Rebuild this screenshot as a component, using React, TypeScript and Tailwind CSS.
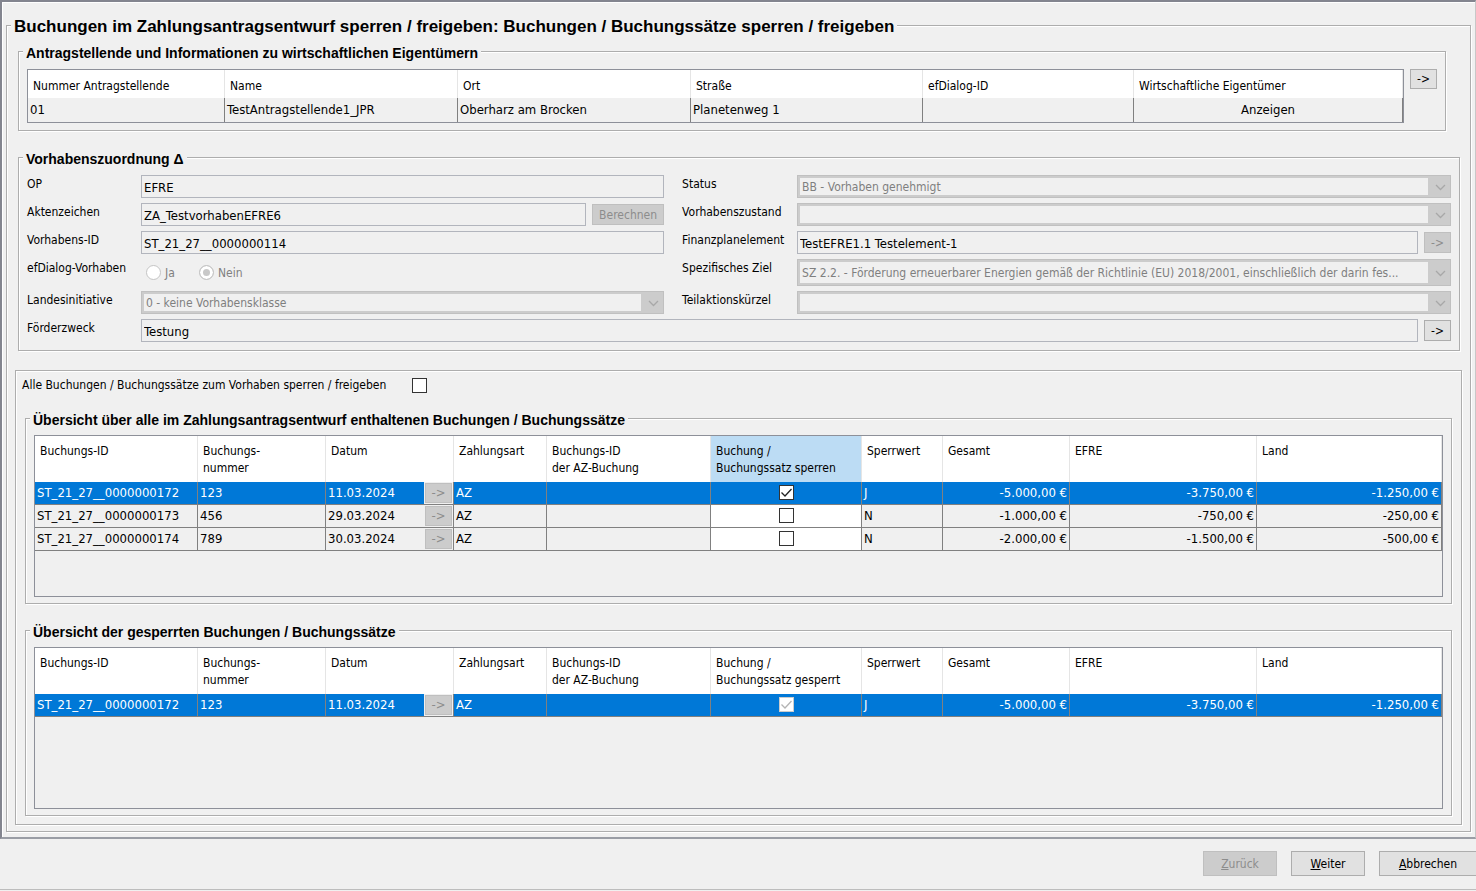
import type { ReactNode } from "react";
import clsx from "clsx";

type Booking = {
  id: string;
  number: string;
  date: string;
  type: string;
  locked: boolean;
  lockValue: string;
  total: string;
  efre: string;
  land: string;
};

const bookings: Booking[] = [
  {
    id: "ST_21_27__0000000172",
    number: "123",
    date: "11.03.2024",
    type: "AZ",
    locked: true,
    lockValue: "J",
    total: "-5.000,00 €",
    efre: "-3.750,00 €",
    land: "-1.250,00 €",
  },
  {
    id: "ST_21_27__0000000173",
    number: "456",
    date: "29.03.2024",
    type: "AZ",
    locked: false,
    lockValue: "N",
    total: "-1.000,00 €",
    efre: "-750,00 €",
    land: "-250,00 €",
  },
  {
    id: "ST_21_27__0000000174",
    number: "789",
    date: "30.03.2024",
    type: "AZ",
    locked: false,
    lockValue: "N",
    total: "-2.000,00 €",
    efre: "-1.500,00 €",
    land: "-500,00 €",
  },
];

const etched =
  "min-w-0 border border-[#adadad] shadow-[inset_1px_1px_0_#ffffff,1px_1px_0_#ffffff]";

function Group({
  title,
  className,
  children,
}: {
  title: string;
  className?: string;
  children: ReactNode;
}) {
  return (
    <fieldset className={clsx(etched, "px-2", className)}>
      <legend className="-ml-1 bg-[#f0f0f0] px-[3px] pt-1 font-['Liberation_Sans',Arial,sans-serif] text-[14px] leading-4 font-bold">
        {title}
      </legend>
      {children}
    </fieldset>
  );
}

function ArrowButton({
  label,
  disabled,
  className,
}: {
  label: string;
  disabled?: boolean;
  className?: string;
}) {
  return (
    <button
      type="button"
      aria-label={label}
      disabled={disabled}
      className={clsx(
        "flex w-[27px] shrink-0 items-center justify-center border border-[#adadad] bg-[#e1e1e1] leading-4 disabled:border-[#bfbfbf] disabled:bg-[#cccccc] disabled:text-[#8c8c8c]",
        className
      )}
    >
      -&gt;
    </button>
  );
}

function CheckBox({
  id,
  label,
  checked,
  disabled,
}: {
  id?: string;
  label?: string;
  checked?: boolean;
  disabled?: boolean;
}) {
  return (
    <span className="inline-grid size-[15px] align-top">
      <input
        id={id}
        type="checkbox"
        aria-label={label}
        defaultChecked={checked}
        disabled={disabled}
        className="peer col-start-1 row-start-1 size-[15px] appearance-none border border-[#333333] bg-white disabled:border-[#cccccc]"
      />
      <svg
        viewBox="0 0 15 15"
        className="pointer-events-none invisible col-start-1 row-start-1 size-[15px] fill-none stroke-[#222222] peer-checked:visible peer-disabled:stroke-[#b4b4b4]"
      >
        <path d="M2.5 7.5 L6 11 L12.5 4" strokeWidth="1.3" />
      </svg>
    </span>
  );
}

function Field({ id, value }: { id: string; value: string }) {
  return (
    <input
      id={id}
      type="text"
      readOnly
      defaultValue={value}
      className="h-[23px] w-full min-w-0 flex-1 border border-[#b2b5bd] bg-[#f0f0f0] px-[2px] pt-px text-[13px] outline-none"
    />
  );
}

function ComboBox({
  id,
  value,
  className = "h-[23px]",
}: {
  id: string;
  value?: string;
  className?: string;
}) {
  return (
    <div
      className={clsx(
        "flex min-w-0 flex-1 border border-[#c0c0c0] bg-[#cccccc] p-[2px]",
        className
      )}
    >
      <select
        id={id}
        disabled
        className="min-w-0 flex-1 appearance-none overflow-hidden bg-[#f0f0f0] px-[2px] text-ellipsis text-[#7f7f7f] opacity-100"
      >
        <option>{value}</option>
      </select>
      <svg
        viewBox="0 0 20 17"
        className="w-5 shrink-0 fill-none stroke-[#a8a8a8]"
      >
        <path d="M8 7 L12.5 11.5 L17 7" strokeWidth="1.3" />
      </svg>
    </div>
  );
}

function FieldLabel({
  htmlFor,
  right,
  children,
}: {
  htmlFor: string;
  right?: boolean;
  children: ReactNode;
}) {
  return (
    <label
      htmlFor={htmlFor}
      className={clsx(
        "pt-px leading-4 whitespace-nowrap",
        right && "pl-[18px]"
      )}
    >
      {children}
    </label>
  );
}

function Radio({ label, checked }: { label: string; checked?: boolean }) {
  return (
    <label className="flex w-[53px] items-center gap-1 text-[#808080]">
      <input
        type="radio"
        name="efdialog-vorhaben"
        defaultChecked={checked}
        disabled
        className="size-[15px] shrink-0 appearance-none rounded-full border border-[#c4c4c4] bg-white checked:bg-[#c8c8c8] checked:shadow-[inset_0_0_0_3px_#ffffff]"
      />
      {label}
    </label>
  );
}

function ApplicantTable() {
  const th =
    "h-7 border-r border-[#e5e5e5] bg-white px-[5px] pt-1 text-left font-normal";
  const td = "h-6 border-r border-[#808080] px-[2px] text-[13px]";
  return (
    <table className="w-full flex-1 table-fixed border-separate border-spacing-0 border border-[#8d9099]">
      <colgroup>
        <col className="w-[197px]" />
        <col className="w-[233px]" />
        <col className="w-[233px]" />
        <col className="w-[232px]" />
        <col className="w-[211px]" />
        <col />
      </colgroup>
      <thead>
        <tr>
          <th className={th}>Nummer Antragstellende</th>
          <th className={th}>Name</th>
          <th className={th}>Ort</th>
          <th className={th}>Straße</th>
          <th className={th}>efDialog-ID</th>
          <th className={th}>Wirtschaftliche Eigentümer</th>
        </tr>
      </thead>
      <tbody>
        <tr>
          <td className={td}>01</td>
          <td className={td}>TestAntragstellende1_JPR</td>
          <td className={td}>Oberharz am Brocken</td>
          <td className={td}>Planetenweg 1</td>
          <td className={td}></td>
          <td className={clsx(td, "text-center")}>Anzeigen</td>
        </tr>
      </tbody>
    </table>
  );
}

function BookingTable({
  rows,
  lockTitle,
  readOnly,
}: {
  rows: Booking[];
  lockTitle: string;
  readOnly?: boolean;
}) {
  const th =
    "h-[46px] border-r border-[#e5e5e5] px-[5px] pt-[7px] text-left align-top leading-[17px] font-normal";
  return (
    <div className="h-[162px] border border-[#8d9099]">
      <table className="w-full table-fixed border-separate border-spacing-0">
        <colgroup>
          <col className="w-[163px]" />
          <col className="w-[128px]" />
          <col className="w-[128px]" />
          <col className="w-[93px]" />
          <col className="w-[164px]" />
          <col className="w-[151px]" />
          <col className="w-[81px]" />
          <col className="w-[127px]" />
          <col className="w-[187px]" />
          <col />
        </colgroup>
        <thead className="bg-white">
          <tr>
            <th className={th}>Buchungs-ID</th>
            <th className={th}>
              Buchungs-
              <br />
              nummer
            </th>
            <th className={th}>Datum</th>
            <th className={th}>Zahlungsart</th>
            <th className={th}>
              Buchungs-ID
              <br />
              der AZ-Buchung
            </th>
            <th
              className={clsx(
                th,
                "whitespace-nowrap",
                !readOnly && "bg-[#bcdcf4]"
              )}
            >
              Buchung /
              <br />
              {lockTitle}
            </th>
            <th className={th}>Sperrwert</th>
            <th className={th}>Gesamt</th>
            <th className={th}>EFRE</th>
            <th className={th}>Land</th>
          </tr>
        </thead>
        <tbody className="text-[13px]">
          {rows.map((row, i) => {
            const selected = i === 0;
            const td = "h-[23px] border-r border-b border-[#808080] px-[2px]";
            return (
              <tr
                key={row.id}
                className={clsx(selected && "bg-[#0078d7] text-white")}
              >
                <td className={td}>{row.id}</td>
                <td className={td}>{row.number}</td>
                <td className="h-[23px] border-r border-b border-[#808080]">
                  <div className="flex items-center justify-between pl-[2px]">
                    {row.date}
                    <span className="bg-[#f0f0f0] p-px">
                      <ArrowButton
                        label="Datum öffnen"
                        disabled
                        className="h-5"
                      />
                    </span>
                  </div>
                </td>
                <td className={td}>{row.type}</td>
                <td className={td}></td>
                <td className={clsx(td, "text-center", !selected && "bg-white")}>
                  <CheckBox
                    label={lockTitle}
                    checked={row.locked}
                    disabled={readOnly}
                  />
                </td>
                <td className={td}>{row.lockValue}</td>
                <td className={clsx(td, "text-right")}>{row.total}</td>
                <td className={clsx(td, "text-right")}>{row.efre}</td>
                <td className={clsx(td, "text-right")}>{row.land}</td>
              </tr>
            );
          })}
        </tbody>
      </table>
    </div>
  );
}

export default function App() {
  const footerButton =
    "h-[25px] w-[74px] border border-[#adadad] bg-[#e1e1e1] disabled:border-[#bfbfbf] disabled:bg-[#cccccc] disabled:text-[#8c8c8c]";
  return (
    <div className="flex min-h-screen flex-col bg-[#f0f0f0] font-['DejaVu_Sans_Condensed','Noto_Sans',sans-serif] text-[12px] leading-4 text-black">
      <main className="border-t-2 border-r border-b-2 border-l-2 border-t-[#83858f] border-r-[#c8c8c8] border-b-[#9a9da5] border-l-[#83858f] pt-[11px] pr-1 pb-[5px] pl-1 shadow-[inset_1px_1px_0_#ffffff]">
        <fieldset className={clsx(etched, "px-2 pb-[6px]")}>
          <legend className="-ml-1 bg-[#f0f0f0] px-[3px] pt-1 font-['Liberation_Sans',Arial,sans-serif] text-[17px] leading-5 font-bold">
            Buchungen im Zahlungsantragsentwurf sperren / freigeben: Buchungen /
            Buchungssätze sperren / freigeben
          </legend>

          <Group
            title="Antragstellende und Informationen zu wirtschaftlichen Eigentümern"
            className="mt-1 mr-4 ml-[3px] pt-2 pb-[7px]"
          >
            <div className="flex items-start gap-[6px]">
              <ApplicantTable />
              <ArrowButton label="Antragstellende öffnen" className="h-5" />
            </div>
          </Group>

          <Group
            title="Vorhabenszuordnung Δ"
            className="mt-4 mr-[2px] ml-[3px] pt-2 pb-2"
          >
            <div className="grid grid-cols-[114px_minmax(0,4fr)_133px_minmax(0,5fr)] items-start gap-y-[5px]">
              <FieldLabel htmlFor="op">OP</FieldLabel>
              <Field id="op" value="EFRE" />
              <FieldLabel htmlFor="status" right>
                Status
              </FieldLabel>
              <ComboBox id="status" value="BB - Vorhaben genehmigt" />

              <FieldLabel htmlFor="aktenzeichen">Aktenzeichen</FieldLabel>
              <div className="flex items-center gap-[6px]">
                <Field id="aktenzeichen" value="ZA_TestvorhabenEFRE6" />
                <button
                  type="button"
                  disabled
                  className="h-[21px] w-[72px] shrink-0 border border-[#bfbfbf] bg-[#cccccc] text-[#8c8c8c]"
                >
                  Berechnen
                </button>
              </div>
              <FieldLabel htmlFor="zustand" right>
                Vorhabenszustand
              </FieldLabel>
              <ComboBox id="zustand" />

              <FieldLabel htmlFor="vorhabens-id">Vorhabens-ID</FieldLabel>
              <Field id="vorhabens-id" value="ST_21_27__0000000114" />
              <FieldLabel htmlFor="finanzplan" right>
                Finanzplanelement
              </FieldLabel>
              <div className="flex items-center gap-[6px]">
                <Field id="finanzplan" value="TestEFRE1.1 Testelement-1" />
                <ArrowButton
                  label="Finanzplanelement öffnen"
                  disabled
                  className="h-[21px]"
                />
              </div>

              <span id="efdialog-label" className="pt-px">
                efDialog-Vorhaben
              </span>
              <div
                role="radiogroup"
                aria-labelledby="efdialog-label"
                className="flex h-[27px] items-center pl-[5px]"
              >
                <Radio label="Ja" />
                <Radio label="Nein" checked />
              </div>
              <FieldLabel htmlFor="ziel" right>
                Spezifisches Ziel
              </FieldLabel>
              <ComboBox
                id="ziel"
                className="h-[27px]"
                value="SZ 2.2. - Förderung erneuerbarer Energien gemäß der Richtlinie (EU) 2018/2001, einschließlich der darin fes..."
              />

              <FieldLabel htmlFor="landesinitiative">
                Landesinitiative
              </FieldLabel>
              <ComboBox
                id="landesinitiative"
                value="0 - keine Vorhabensklasse"
              />
              <FieldLabel htmlFor="teilaktion" right>
                Teilaktionskürzel
              </FieldLabel>
              <ComboBox id="teilaktion" />

              <FieldLabel htmlFor="zweck">Förderzweck</FieldLabel>
              <div className="col-span-3 flex items-center gap-[6px]">
                <Field id="zweck" value="Testung" />
                <ArrowButton label="Förderzweck öffnen" className="h-[21px]" />
              </div>
            </div>
          </Group>

          <section className={clsx(etched, "mt-[19px] px-[6px] pt-[7px] pb-2")}>
            <div className="flex gap-[26px]">
              <label htmlFor="lock-all" className="h-[15px] leading-[14px]">
                Alle Buchungen / Buchungssätze zum Vorhaben sperren / freigeben
              </label>
              <CheckBox id="lock-all" />
            </div>

            <Group
              title="Übersicht über alle im Zahlungsantragsentwurf enthaltenen Buchungen / Buchungssätze"
              className="mx-[3px] mt-[15px] pt-[7px] pb-[6px]"
            >
              <BookingTable rows={bookings} lockTitle="Buchungssatz sperren" />
            </Group>

            <Group
              title="Übersicht der gesperrten Buchungen / Buchungssätze"
              className="mx-[3px] mt-4 pt-[7px] pb-[6px]"
            >
              <BookingTable
                rows={bookings.filter((b) => b.locked)}
                lockTitle="Buchungssatz gesperrt"
                readOnly
              />
            </Group>
          </section>
        </fieldset>
      </main>

      <footer className="flex flex-1 items-start justify-end gap-[14px] pt-3">
        <button type="button" disabled className={footerButton}>
          <u>Z</u>urück
        </button>
        <button type="button" className={footerButton}>
          <u>W</u>eiter
        </button>
        <button
          type="button"
          className="h-[25px] w-[97px] border border-r-0 border-[#adadad] bg-[#e1e1e1]"
        >
          <u>A</u>bbrechen
        </button>
      </footer>
      <div className="mb-px h-px bg-[#bdbdbd]" />
    </div>
  );
}
